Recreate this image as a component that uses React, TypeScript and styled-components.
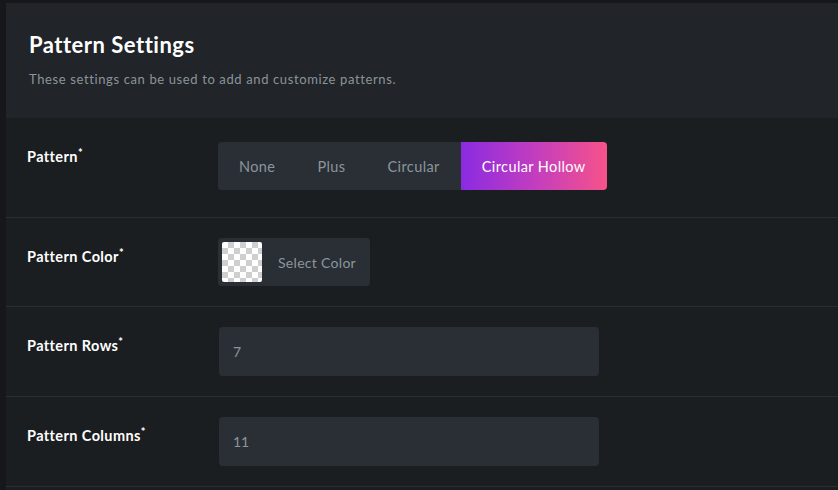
import styled, { createGlobalStyle } from 'styled-components';

const GlobalStyle = createGlobalStyle`
  html, body {
    margin: 0;
    padding: 0;
    background: #15171a;
  }
  body {
    font-family: 'Lato', 'Noto Sans', sans-serif;
  }
`;

const options = ['None', 'Plus', 'Circular', 'Circular Hollow'];

const App = () => {
  return (
    <>
      <GlobalStyle />
      <Page>
        <Panel>
          <Header>
            <Title>Pattern Settings</Title>
            <Subtitle>These settings can be used to add and customize patterns.</Subtitle>
          </Header>
          <Row>
            <Label>Pattern</Label>
            <Segmented>
              {options.map((o, i) => (
                <Segment key={o} $active={i === options.length - 1}>
                  {o}
                </Segment>
              ))}
            </Segmented>
          </Row>
          <Row>
            <Label>Pattern Color</Label>
            <ColorPicker>
              <Swatch />
              <PickerText>Select Color</PickerText>
            </ColorPicker>
          </Row>
          <Row>
            <Label>Pattern Rows</Label>
            <Input defaultValue="7" />
          </Row>
          <Row>
            <Label>Pattern Columns</Label>
            <Input defaultValue="11" />
          </Row>
        </Panel>
      </Page>
    </>
  );
};

const Page = styled.div`
  width: 838px;
  height: 490px;
  overflow: hidden;
  padding: 3px 0 0 6px;
  box-sizing: border-box;
  background: #15171a;
`;

const Panel = styled.div`
  background: #1b1e21;
  min-height: 100%;
`;

const Header = styled.div`
  background: #212428;
  padding: 29px 23px 0;
  height: 115px;
  box-sizing: border-box;
`;

const Title = styled.h2`
  margin: 0;
  color: #ffffff;
  font-size: 22px;
  font-weight: 700;
  letter-spacing: 0.5px;
  line-height: 26px;
`;

const Subtitle = styled.p`
  margin: 13px 0 0;
  color: #8b949b;
  font-size: 13px;
  line-height: 16px;
  letter-spacing: 0.62px;
`;

const Row = styled.div`
  display: grid;
  grid-template-columns: 191px 1fr;
  align-items: start;
  padding: 20px 0 20px 21px;
  border-bottom: 1px solid #2a2d31;
`;

const Label = styled.div`
  color: #ffffff;
  font-size: 14.5px;
  font-weight: 700;
  letter-spacing: 0.4px;
  padding-top: 8px;
  &::after {
    content: '*';
    font-size: 11px;
    vertical-align: 5px;
    margin-left: 0;
  }
`;

const Segmented = styled.div`
  display: inline-flex;
  justify-self: start;
  height: 48px;
  margin: 4px 0 7px;
  background: #2a2f35;
  border-radius: 4px;
  overflow: hidden;
`;

const Segment = styled.div<{ $active?: boolean }>`
  display: flex;
  align-items: center;
  padding: 0 21px;
  font-size: 14.5px;
  letter-spacing: 0.4px;
  color: ${(p) => (p.$active ? '#ffffff' : '#8c959c')};
  background: ${(p) =>
    p.$active ? 'linear-gradient(90deg, #8a2be2 0%, #c23dbf 50%, #f7528a 100%)' : 'transparent'};
`;

const ColorPicker = styled.div`
  display: inline-flex;
  justify-self: start;
  align-items: center;
  gap: 16px;
  height: 48px;
  padding: 0 14px 0 4px;
  background: #2a2f35;
  border-radius: 4px;
`;

const Swatch = styled.div`
  width: 40px;
  height: 40px;
  border-radius: 2px;
  background-color: #ffffff;
  background-image: linear-gradient(45deg, #cfcfcf 25%, transparent 25%),
    linear-gradient(-45deg, #cfcfcf 25%, transparent 25%),
    linear-gradient(45deg, transparent 75%, #cfcfcf 75%),
    linear-gradient(-45deg, transparent 75%, #cfcfcf 75%);
  background-size: 12px 12px;
  background-position: 0 0, 0 6px, 6px -6px, -6px 0;
`;

const PickerText = styled.span`
  color: #8c959c;
  font-size: 14px;
  letter-spacing: 0.3px;
`;

const Input = styled.input`
  width: 380px;
  height: 49px;
  box-sizing: border-box;
  margin-left: 1px;
  padding: 0 14px;
  border: none;
  outline: none;
  border-radius: 4px;
  background: #2a2f35;
  color: #8c959c;
  font-family: 'Lato', 'Noto Sans', sans-serif;
  font-size: 14px;
`;

export default App;
